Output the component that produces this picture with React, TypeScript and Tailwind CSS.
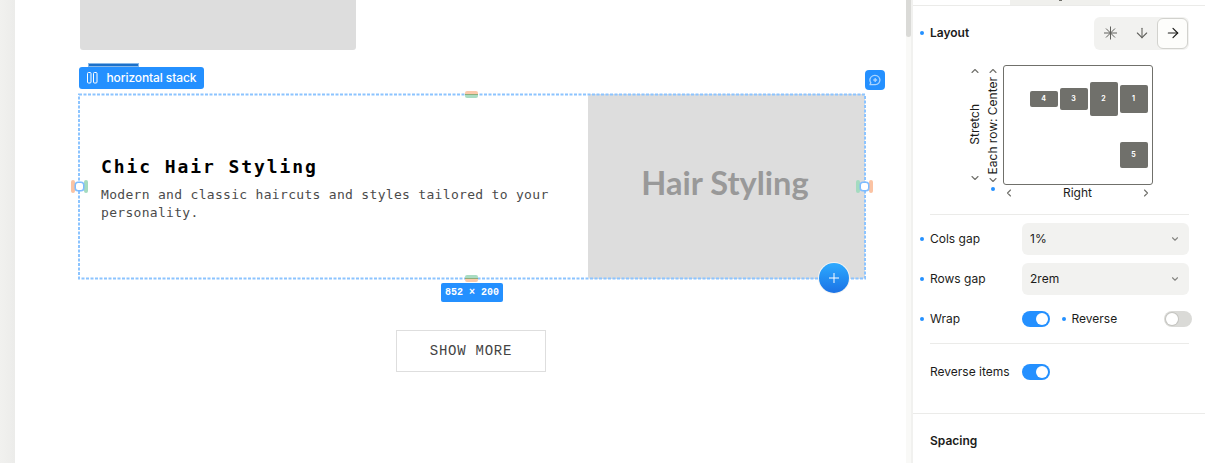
import type { ReactNode } from "react";
import { ArrowDown, ArrowRight, ChevronDown, ChevronLeft, ChevronRight, ChevronUp } from "lucide-react";

const ORDER_TILES = [
  { label: "4", size: "h-4" },
  { label: "3", size: "h-[22px]" },
  { label: "2", size: "h-[34px]" },
  { label: "1", size: "h-7" },
];

function Dot({ className = "" }: { className?: string }) {
  return <span className={`block size-1 shrink-0 rounded-full bg-[#2490ff] ${className}`} />;
}

function Toggle({ on = false }: { on?: boolean }) {
  return (
    <span className={`flex h-4 w-7 shrink-0 items-center rounded-full px-0.5 ${on ? "justify-end bg-[#2490ff]" : "justify-start bg-[#dadad7]"}`}>
      <span className={`block size-3 rounded-full bg-white ${on ? "" : "ring-1 ring-[#c4c4c0]"}`} />
    </span>
  );
}

function Label({ dot = true, children }: { dot?: boolean; children: ReactNode }) {
  return (
    <div className="flex w-[102px] shrink-0 items-center gap-1.5 whitespace-nowrap">
      <Dot className={dot ? "" : "invisible"} />
      <span>{children}</span>
    </div>
  );
}

function GapRow({ label, value }: { label: string; value: string }) {
  return (
    <div className="flex h-8 items-center">
      <Label>{label}</Label>
      <div className="flex h-8 w-[167px] items-center justify-between rounded-md bg-[#f2f2f0] pr-[9px] pl-2">
        <span>{value}</span>
        <ChevronDown className="size-2.5 text-[#858581]" strokeWidth={2.6} />
      </div>
    </div>
  );
}

function Tile({ label, size }: { label: string; size: string }) {
  return (
    <span className={`flex w-7 items-center justify-center rounded-[2px] bg-[#70706b] pr-px text-[7px] font-bold text-white ${size}`}>
      {label}
    </span>
  );
}

function VerticalPicker({ label, className = "" }: { label: string; className?: string }) {
  return (
    <div className={`flex w-[18px] flex-col items-center justify-between ${className}`}>
      <ChevronUp className="size-3 shrink-0 text-[#70706b]" strokeWidth={2.2} />
      <span className="-ml-px rotate-180 leading-none whitespace-nowrap [writing-mode:vertical-rl]">{label}</span>
      <ChevronDown className="size-3 shrink-0 text-[#70706b]" strokeWidth={2.2} />
    </div>
  );
}

/* margin / padding grips drawn on the selection outline */
function Grips() {
  return (
    <>
      <span className="absolute -top-[3px] left-[386px] flex h-[7px] w-[13px] flex-col overflow-hidden rounded-[2px]">
        <span className="h-[3px] bg-[#fbc9aa]" />
        <span className="h-px bg-[#8fae7c]" />
        <span className="h-[3px] bg-[#a9dcc2]" />
      </span>
      <span className="absolute -bottom-[3px] left-[386px] flex h-[7px] w-[13px] flex-col overflow-hidden rounded-[2px]">
        <span className="h-[3px] bg-[#a9dcc2]" />
        <span className="h-px bg-[#8fae7c]" />
        <span className="h-[3px] bg-[#fbc9aa]" />
      </span>
      <span className="absolute top-[86px] -left-2 h-[13px] w-1 rounded-[2px] bg-[#fbc3a3]" />
      <span className="absolute top-[86px] left-[5px] h-[13px] w-1 rounded-[2px] bg-[#a4dbc0]" />
      <span className="absolute top-[88px] -left-[4px] size-[9px] rounded-[3px] border-[1.5px] border-[#7abaff] bg-white ring-[0.5px] ring-[#7abaff]" />
      <span className="absolute top-[86px] right-[5px] h-[13px] w-1 rounded-[2px] bg-[#a4dbc0]" />
      <span className="absolute top-[86px] -right-2 h-[13px] w-1 rounded-[2px] bg-[#fbc3a3]" />
      <span className="absolute top-[88px] -right-[4px] size-[9px] rounded-[3px] border-[1.5px] border-[#7abaff] bg-white ring-[0.5px] ring-[#7abaff]" />
    </>
  );
}

function Canvas() {
  return (
    <main className="flex w-[891px] shrink-0 flex-col bg-white pl-16">
      <div className="ml-px h-[50px] w-[275.5px] rounded-b-[3px] bg-[#dddddd]" />
      <div className="mt-[13px] ml-[9px] h-1 w-[51px] border border-[#86b7e8] bg-[#1b70c9]" />

      <div className="flex h-[22px] w-[125px] items-center rounded-[3px] bg-[#2490ff] pl-[7px] text-[12px] text-white">
        <svg width="13" height="12" viewBox="0 0 13 12" fill="none" stroke="currentColor" className="mr-[7.5px] shrink-0">
          <rect x="1.5" y="0.5" width="3.5" height="10.5" rx="1" />
          <rect x="7.5" y="0.5" width="3.5" height="10.5" rx="1" />
        </svg>
        <span className="font-medium tracking-[-0.1px] whitespace-nowrap">horizontal stack</span>
      </div>

      <section className="relative mt-[5px] flex h-[185px] w-[786px]">
        <div className="flex w-[509px] flex-col justify-center pt-[3px] pl-[22px] font-['DejaVu_Sans_Mono',monospace]">
          <h3 className="text-[18px] leading-6 font-bold tracking-[1.92px] text-black">Chic Hair Styling</h3>
          <p className="mt-[7px] w-[470px] text-[13px] leading-[18px] tracking-[0.31px] text-[#4b4b4b]">
            Modern and classic haircuts and styles tailored to your personality.
          </p>
        </div>
        <div className="flex flex-1 items-center justify-center rounded-[3px] bg-[#dddddd] pr-[3px] pb-[7px] font-['Lato',sans-serif] text-[32.6px] font-bold text-[#999]">
          Hair Styling
        </div>

        <svg className="absolute inset-0 overflow-visible" width="786" height="185" fill="none">
          <rect x="0" y="0.5" width="786" height="184" stroke="#8cc4ff" strokeWidth="2" strokeDasharray="3 1.5" />
        </svg>
        <Grips />

        <span className="absolute -top-6 -right-5 flex size-5 items-center justify-center rounded-[4px] bg-[#2490ff]">
          <svg width="12" height="12" viewBox="0 0 12 12" fill="none" stroke="#a9d4ff" strokeWidth="1.3">
            <path d="M1.8 8.7A5 4.7 0 1 1 6.2 10.7H1Z" strokeLinejoin="round" />
            <path d="M6.2 4.1v3.8M4.3 6h3.8" />
          </svg>
        </span>
        <span className="absolute top-[168px] left-[739px] flex size-8 items-center justify-center rounded-full bg-[#f4f4f2]">
          <span className="flex size-[30px] items-center justify-center rounded-full bg-linear-to-b from-[#2eaaff] to-[#1c72e5]">
            <svg width="10" height="10" viewBox="0 0 10 10" stroke="white">
              <path d="M5 0v10M0 5h10" />
            </svg>
          </span>
        </span>
      </section>

      <div className="mt-1 ml-[362px] flex h-[19px] w-[62px] items-center justify-center rounded-[2px] bg-[#2490ff] pt-px font-['Liberation_Mono',monospace] text-[10px] font-bold text-white">
        852 × 200
      </div>
      <button className="mt-7 ml-[317px] h-[42px] w-[150px] border border-[#dedede] font-['Liberation_Mono',monospace] text-[14px] tracking-[0.75px] text-[#444]">
        SHOW MORE
      </button>
    </main>
  );
}

function LayoutPanel() {
  return (
    <aside className="flex w-[292px] shrink-0 flex-col bg-white pl-[7px]">
      <div className="-ml-[7px] flex h-1.5 shrink-0 border-b border-[#ebebe9] pl-[97px]">
        <div className="flex h-[5px] w-[100px] justify-center bg-[#f0f0ed]">
          <span className="h-px w-[3px] bg-[#70706b]" />
        </div>
      </div>

      <div className="mt-[11px] flex h-8 w-[269px] items-center justify-between">
        <div className="flex items-center gap-1.5 font-semibold">
          <Dot />
          Layout
        </div>
        <div className="flex h-[33px] w-[95px] items-center rounded-md bg-[#f2f2f0]">
          <span className="flex w-8 justify-center">
            <svg width="14" height="14" viewBox="0 0 14 14" stroke="#60605c" strokeWidth="1">
              <path d="M7.5 .5v13M1 7h13M3 2.5l9 9M12 2.5l-9 9" />
            </svg>
          </span>
          <span className="flex w-[31px] justify-center">
            <ArrowDown className="size-4 text-[#60605c]" strokeWidth={1.6} />
          </span>
          <span className="flex h-[31px] w-[31px] items-center justify-center rounded-md border border-[#d2d2ce] bg-[#fdfdfb]">
            <ArrowRight className="size-4" strokeWidth={1.8} />
          </span>
        </div>
      </div>

      <div className="mt-4 ml-[46px] flex">
        <VerticalPicker label="Stretch" className="h-[119px]" />
        <div className="flex flex-col items-center">
          <VerticalPicker label="Each row: Center" className="h-[119px]" />
          <Dot className="mt-[3px]" />
        </div>
        <div className="ml-[1px] w-[150px]">
          <div className="flex h-[120px] flex-col items-end rounded-[3px] border border-[#70706b] pt-4 pr-1">
            <div className="flex h-[34px] items-center gap-0.5">
              {ORDER_TILES.map((tile) => (
                <Tile key={tile.label} label={tile.label} size={tile.size} />
              ))}
            </div>
            <div className="mt-[26px]">
              <Tile label="5" size="h-[26px]" />
            </div>
          </div>
          <div className="flex h-4 items-center justify-between pr-px">
            <ChevronLeft className="size-3 text-[#70706b]" strokeWidth={2.2} />
            <span>Right</span>
            <ChevronRight className="size-3 text-[#70706b]" strokeWidth={2.2} />
          </div>
        </div>
      </div>

      <div className="mt-[13px] ml-2.5 h-px w-[259px] shrink-0 bg-[#ebebe9]" />
      <div className="mt-2 flex flex-col gap-2">
        <GapRow label="Cols gap" value="1%" />
        <GapRow label="Rows gap" value="2rem" />
        <div className="flex h-8 items-center">
          <Label>Wrap</Label>
          <Toggle on />
          <div className="ml-3 flex w-[102px] items-center gap-[5.5px]">
            <Dot />
            Reverse
          </div>
          <Toggle />
        </div>
      </div>

      <div className="mt-2 ml-2.5 h-px w-[259px] shrink-0 bg-[#ebebe9]" />
      <div className="mt-3 flex h-8 items-center">
        <Label dot={false}>Reverse items</Label>
        <Toggle on />
      </div>

      <div className="mt-[25px] -ml-[7px] h-px shrink-0 bg-[#ebebe9]" />
      <h2 className="mt-[18px] ml-2.5 font-semibold">Spacing</h2>
    </aside>
  );
}

export default function App() {
  return (
    <div className="flex h-[463px] w-[1205px] overflow-hidden bg-white font-['Inter',sans-serif] text-[12px] leading-[18px] text-[#1c1c1a]">
      <div className="w-[15px] shrink-0 bg-linear-to-r from-[#f1f1ef] to-[#ececea]" />
      <Canvas />
      <div className="w-[5px] shrink-0 bg-[#f9f9f7]">
        <div className="h-[37px] rounded-b-sm bg-[#dadad7]" />
      </div>
      <div className="w-0.5 shrink-0 bg-[#f1f1ef]" />
      <LayoutPanel />
    </div>
  );
}
